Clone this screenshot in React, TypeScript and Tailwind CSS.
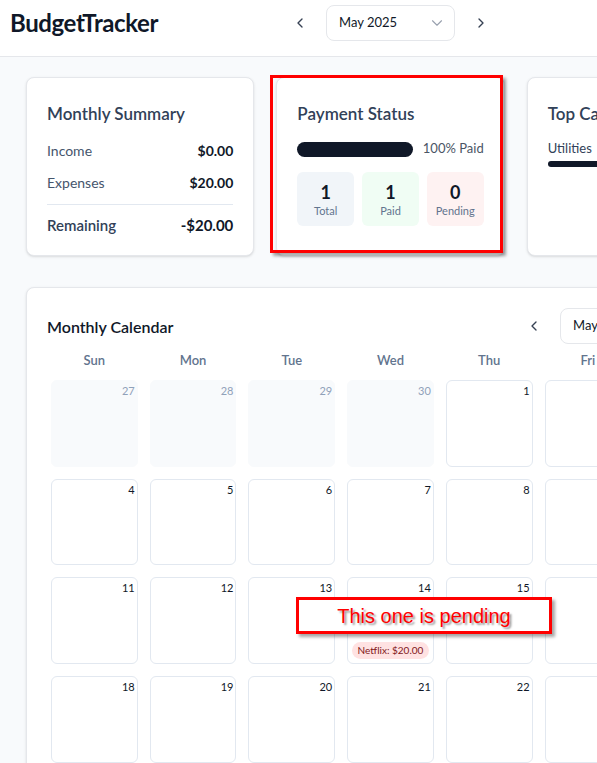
import React from 'react';
import { ChevronLeft, ChevronRight, ChevronDown } from 'lucide-react';

type Day = { n: number; muted?: boolean };

const weeks: Day[][] = [
  [{ n: 27, muted: true }, { n: 28, muted: true }, { n: 29, muted: true }, { n: 30, muted: true }, { n: 1 }, { n: 2 }, { n: 3 }],
  [4, 5, 6, 7, 8, 9, 10].map((n) => ({ n })),
  [11, 12, 13, 14, 15, 16, 17].map((n) => ({ n })),
  [18, 19, 20, 21, 22, 23, 24].map((n) => ({ n })),
  [25, 26, 27, 28, 29, 30, 31].map((n) => ({ n })),
];

const events: Record<number, string> = { 14: 'Netflix: $20.00' };

function MonthNav({ className = '' }: { className?: string }) {
  return (
    <div className={`flex items-center gap-2.5 ${className}`}>
      <button className="w-8 h-9 flex items-center justify-center text-gray-700">
        <ChevronLeft size={16} strokeWidth={2} />
      </button>
      <div className="w-[129px] h-9 flex items-center justify-between pl-3 pr-2 rounded-lg border border-gray-200 bg-white">
        <span className="text-[13px] text-gray-900">May 2025</span>
        <ChevronDown size={18} strokeWidth={1.5} className="text-gray-400" />
      </div>
      <button className="w-8 h-9 flex items-center justify-center text-gray-700">
        <ChevronRight size={16} strokeWidth={2} />
      </button>
    </div>
  );
}

export default function App() {
  return (
    <div className="w-[597px] h-[763px] overflow-hidden bg-slate-50 [font-family:Lato,'Noto_Sans',sans-serif]">
      <div className="relative w-[781px]">
        {/* Header */}
        <header className="h-[57px] bg-white border-b border-gray-200 flex items-start pt-[5px] px-[10px]">
          <div className="flex-1 h-9 flex items-center">
            <h1 className="text-2xl font-bold tracking-[-0.4px] text-gray-900">BudgetTracker</h1>
          </div>
          <MonthNav />
          <div className="flex-1" />
        </header>

        <main className="px-[26px] pt-5">
          {/* Summary cards */}
          <div className="grid grid-cols-3 gap-[22px]">
            <div className="bg-white border border-gray-200 rounded-lg shadow-sm px-5 pt-5 pb-[18px]">
              <h2 className="text-[17px] leading-7 font-semibold text-slate-700 mt-0.5 mb-[13px]">Monthly Summary</h2>
              <div className="space-y-3 text-sm">
                <div className="flex justify-between">
                  <span className="text-slate-600">Income</span>
                  <span className="font-bold text-gray-900">$0.00</span>
                </div>
                <div className="flex justify-between">
                  <span className="text-slate-600">Expenses</span>
                  <span className="font-bold text-gray-900">$20.00</span>
                </div>
              </div>
              <div className="mt-[11px] pt-2 border-t border-slate-200 flex justify-between text-[15px] leading-6">
                <span className="font-semibold text-slate-700">Remaining</span>
                <span className="font-bold text-gray-900">-$20.00</span>
              </div>
            </div>

            <div className="bg-white border border-gray-200 rounded-lg shadow-sm px-5 pt-5 pb-[18px]">
              <h2 className="text-[17px] leading-7 font-semibold text-slate-700 mt-0.5 mb-[11px]">Payment Status</h2>
              <div className="flex items-center gap-2.5 h-5">
                <div className="flex-1 h-[15px] rounded-full bg-gray-900" />
                <span className="text-[13px] text-gray-600">100% Paid</span>
              </div>
              <div className="grid grid-cols-3 gap-2 mt-[13px] text-center">
                <div className="rounded-md bg-slate-100 p-2">
                  <div className="text-lg leading-6 font-bold text-gray-900">1</div>
                  <div className="text-[11px] leading-[14px] text-slate-500">Total</div>
                </div>
                <div className="rounded-md bg-green-50 p-2">
                  <div className="text-lg leading-6 font-bold text-gray-900">1</div>
                  <div className="text-[11px] leading-[14px] text-slate-500">Paid</div>
                </div>
                <div className="rounded-md bg-red-50 p-2">
                  <div className="text-lg leading-6 font-bold text-gray-900">0</div>
                  <div className="text-[11px] leading-[14px] text-slate-500">Pending</div>
                </div>
              </div>
            </div>

            <div className="bg-white border border-gray-200 rounded-lg shadow-sm px-5 pt-5 pb-[18px]">
              <h2 className="text-[17px] leading-7 font-semibold text-slate-700 mt-0.5 mb-[11px]">Top Categories</h2>
              <div className="flex justify-between h-5 items-center text-[13px]">
                <span className="text-slate-700">Utilities</span>
                <span className="font-semibold text-gray-900">$20.00</span>
              </div>
              <div className="mt-0.5 h-1.5 rounded-full bg-gray-900" />
            </div>
          </div>

          {/* Calendar */}
          <div className="mt-[31px] bg-white border border-gray-200 rounded-lg shadow-sm p-5">
            <div className="flex items-center justify-between mb-1.5">
              <h2 className="text-base font-semibold text-gray-900 mt-0.5">Monthly Calendar</h2>
              <MonthNav className="mr-[3px]" />
            </div>
            <div className="grid grid-cols-7 gap-3 px-1 mb-2.5">
              {['Sun', 'Mon', 'Tue', 'Wed', 'Thu', 'Fri', 'Sat'].map((d) => (
                <div key={d} className="text-center text-[13px] leading-5 font-semibold text-slate-500">
                  {d}
                </div>
              ))}
            </div>
            <div className="grid grid-cols-7 gap-3 px-1">
              {weeks.flat().map((day, i) => (
                <div
                  key={i}
                  className={`aspect-square rounded-md border flex flex-col ${
                    day.muted ? 'bg-slate-50 border-slate-50' : 'bg-white border-slate-200'
                  }`}
                >
                  <div
                    className={`text-right text-[11px] leading-4 pt-0.5 pr-[2px] ${
                      day.muted ? 'text-slate-400' : 'text-gray-900'
                    }`}
                  >
                    {day.n}
                  </div>
                  {!day.muted && events[day.n] && (
                    <div className="mt-auto mb-1 flex justify-center">
                      <span className="px-1.5 py-0.5 rounded-full bg-red-100 text-[10px] leading-[13px] text-red-900">
                        {events[day.n]}
                      </span>
                    </div>
                  )}
                </div>
              ))}
            </div>
          </div>
        </main>

        {/* Annotations */}
        <div className="absolute left-[270px] top-[75px] w-[233px] h-[178px] border-[3px] border-[#ff0000] shadow-[3px_3px_3px_rgba(0,0,0,0.35)]" />
        <div className="absolute left-[296px] top-[597px] w-[256px] h-[37px] bg-white border-[3px] border-[#ff0000] shadow-[3px_3px_3px_rgba(0,0,0,0.35)] flex items-center justify-center">
          <span className="[font-family:'Liberation_Sans',Arial,sans-serif] text-[20px] leading-6 text-[#ff0000] [text-shadow:2px_2px_2px_rgba(0,0,0,0.4)]">
            This one is pending
          </span>
        </div>
      </div>
    </div>
  );
}
